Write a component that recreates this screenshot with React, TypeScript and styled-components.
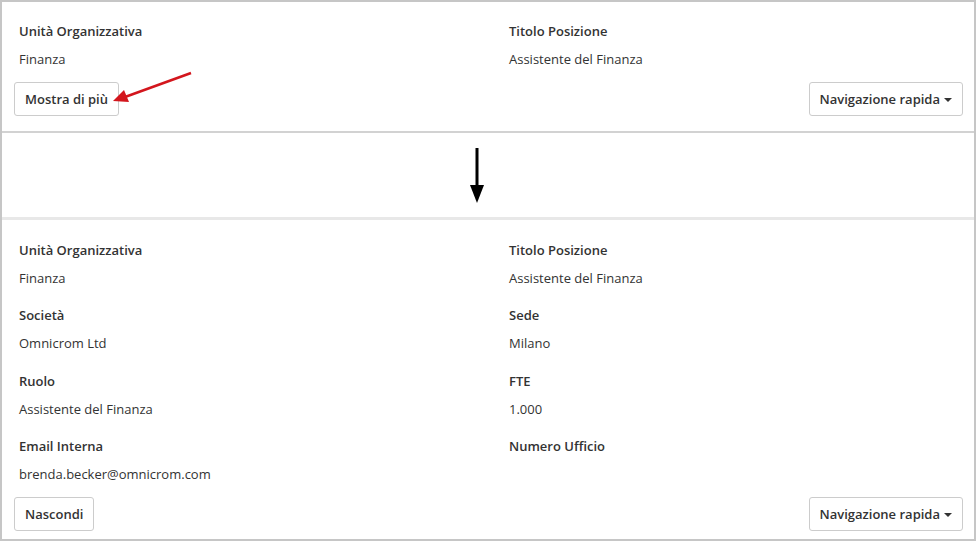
import React from 'react';
import styled, {createGlobalStyle} from "styled-components";

const GlobalStyle = createGlobalStyle`
  html, body {
    margin: 0;
    padding: 0;
    background: #fff;
  }
  body {
    font-family: "Open Sans", "Liberation Sans", sans-serif;
    font-size: 13px;
    color: #333;
  }
`

type FieldType = {
    label: string
    value?: string
}

const topFields: FieldType[] = [
    {label: "Unità Organizzativa", value: "Finanza"},
    {label: "Titolo Posizione", value: "Assistente del Finanza"},
]

const allFields: FieldType[] = [
    {label: "Unità Organizzativa", value: "Finanza"},
    {label: "Titolo Posizione", value: "Assistente del Finanza"},
    {label: "Società", value: "Omnicrom Ltd"},
    {label: "Sede", value: "Milano"},
    {label: "Ruolo", value: "Assistente del Finanza"},
    {label: "FTE", value: "1.000"},
    {label: "Email Interna", value: "brenda.becker@omnicrom.com"},
    {label: "Numero Ufficio"},
]

function FieldGrid({fields}: { fields: FieldType[] }) {
    return (
        <Grid>
            {fields.map((f) => (
                <Field key={f.label}>
                    <Label>{f.label}</Label>
                    <Value>{f.value || "\u00a0"}</Value>
                </Field>
            ))}
        </Grid>
    )
}

function App() {
    return (
        <>
            <GlobalStyle/>
            <Frame>
                <Panel position={"top"}>
                    <FieldGrid fields={topFields}/>
                    <Actions>
                        <Button>Mostra di più</Button>
                        <Button>Navigazione rapida<Caret/></Button>
                    </Actions>
                    <RedArrow width="90" height="40" viewBox="0 0 90 40">
                        <line x1="80" y1="4" x2="14" y2="28" stroke="#d3161d" strokeWidth="2.6"/>
                        <polygon points="2,32 13,21 18,33" fill="#d3161d"/>
                    </RedArrow>
                </Panel>
                <Spacer>
                    <svg width="16" height="56" viewBox="0 0 16 56">
                        <rect x="6.5" y="0" width="3" height="42" fill="#000"/>
                        <polygon points="1,37 15,37 8,55" fill="#000"/>
                    </svg>
                </Spacer>
                <Panel position={"bottom"}>
                    <FieldGrid fields={allFields}/>
                    <Actions>
                        <Button>Nascondi</Button>
                        <Button>Navigazione rapida<Caret/></Button>
                    </Actions>
                </Panel>
            </Frame>
        </>
    );
}

export default App;

const Frame = styled.div`
  box-sizing: border-box;
  width: 976px;
  height: 541px;
  border: 2px solid #c6c6c6;
  display: flex;
  flex-direction: column;
  background: #fff;
`

const Panel = styled.section<{ position: "top" | "bottom" }>`
  position: relative;
  padding: ${props => props.position === "top" ? "19px 11px 15px 12px" : "20px 11px 0 12px"};
  border-top: ${props => props.position === "bottom" ? "3px solid #e8e8e8" : "none"};
  border-bottom: ${props => props.position === "top" ? "2px solid #d2d2d2" : "none"};
`

const Spacer = styled.div`
  height: 84px;
  display: flex;
  align-items: flex-start;
  padding: 15px 0 0 467px;
  box-sizing: border-box;
`

const Grid = styled.div`
  display: grid;
  grid-template-columns: 490px 1fr;
  row-gap: 17.4px;
`

const Field = styled.div`
  padding-left: 5px;
  display: flex;
  flex-direction: column;
  gap: 8px;
`

const Label = styled.div`
  font-weight: 600;
  line-height: 20px;
`

const Value = styled.div`
  line-height: 20px;
`

const Actions = styled.div`
  display: flex;
  justify-content: space-between;
  margin-top: 13px;
`

const Button = styled.button`
  height: 34px;
  padding: 0 10px;
  border: 1px solid #ccc;
  border-radius: 3px;
  background: #fff;
  font-family: "Open Sans", "Liberation Sans", sans-serif;
  font-size: 13px;
  font-weight: 600;
  color: #333;
  display: inline-flex;
  align-items: center;
  cursor: pointer;
`

const Caret = styled.span`
  display: inline-block;
  width: 0;
  height: 0;
  margin-left: 4px;
  margin-top: 1px;
  border-top: 4px solid #333;
  border-left: 4px solid transparent;
  border-right: 4px solid transparent;
`

const RedArrow = styled.svg`
  position: absolute;
  left: 109px;
  top: 67px;
`
